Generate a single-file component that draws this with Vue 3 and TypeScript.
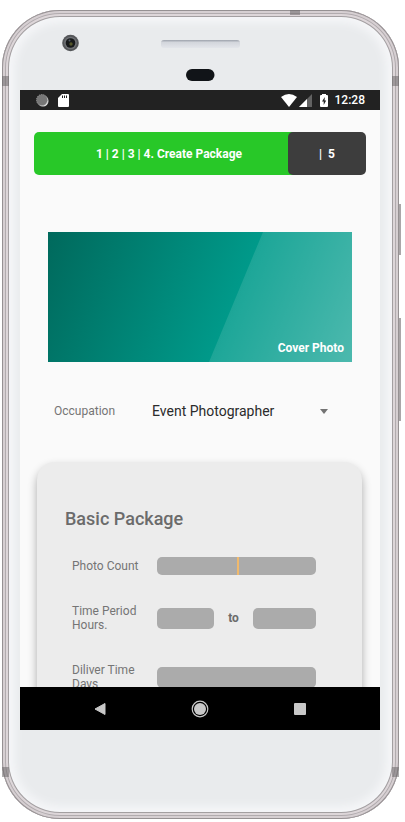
<script setup lang="ts">
import { ref } from 'vue'

const occupations: string[] = ['Event Photographer']
const occupation = ref<string>(occupations[0])
const photoCount = ref<string>('')
const hoursFrom = ref<string>('')
const hoursTo = ref<string>('')
const deliveryDays = ref<string>('')
</script>

<template>
  <div class="stage">
    <div class="phone">
      <span class="side-button power"></span>
      <span class="side-button volume"></span>
      <span class="seam seam-top"></span>
      <span class="seam seam-left upper"></span>
      <span class="seam seam-right upper"></span>
      <span class="seam seam-left lower"></span>
      <span class="seam seam-right lower"></span>

      <svg class="bezel" viewBox="0 0 360 74" aria-hidden="true">
        <defs>
          <linearGradient id="speaker" x1="0" y1="0" x2="0" y2="1">
            <stop offset="0" stop-color="#9ca1ab" />
            <stop offset="0.3" stop-color="#d3d6dc" />
            <stop offset="1" stop-color="#e3e5ea" />
          </linearGradient>
        </defs>
        <circle cx="50.500" cy="27" r="8.300" fill="#55575a" />
        <circle cx="50.500" cy="27" r="6.300" fill="#707276" />
        <circle cx="50.500" cy="27" r="4.800" fill="#17191b" />
        <circle cx="51" cy="28" r="1.700" fill="#55572c" />
        <circle cx="49.500" cy="24.500" r="1" fill="#535c64" />
        <rect x="141" y="24" width="79" height="8" rx="3" fill="url(#speaker)" />
        <rect x="166" y="53" width="28.500" height="12" rx="6" fill="#111418" />
      </svg>

      <div class="screen">
        <header class="status">
          <div class="status-group">
            <svg width="13" height="13" viewBox="0 0 13 13" aria-hidden="true">
              <circle cx="7" cy="7" r="5.500" fill="#e5e5e5" />
              <circle cx="6" cy="6" r="5.500" fill="#777" stroke="#a0a0a0" stroke-dasharray="1 1" />
            </svg>
            <svg width="11" height="13" viewBox="0 0 11 13" aria-hidden="true">
              <path d="M4 0H10Q11 0 11 1V12Q11 13 10 13H1Q0 13 0 12V4Z" fill="#fff" />
              <path d="M4.500 1.500V4M6.500 1.500V4M8.500 1.500V4" stroke="#222" />
            </svg>
          </div>
          <div class="status-group end">
            <svg width="16" height="13" viewBox="0 0 16 13" aria-hidden="true">
              <path d="M0 3Q8-3 16 3L8 13Z" fill="#fff" />
            </svg>
            <svg width="13" height="13" viewBox="0 0 13 13" aria-hidden="true">
              <path d="M0 13L13 0V13Z" fill="#626262" />
              <path d="M0 13L8 5V13Z" fill="#fff" />
            </svg>
            <svg class="battery" width="8" height="13" viewBox="0 0 8 13" aria-hidden="true">
              <path d="M2 0H6V1H7Q8 1 8 2V12Q8 13 7 13H1Q0 13 0 12V2Q0 1 1 1H2Z" fill="#fff" />
              <path d="M4.800 3L2 7.500H3.700V11L6.200 6.500H4.600Z" fill="#222" />
            </svg>
            <time>12:28</time>
          </div>
        </header>

        <main class="content">
          <div class="steps">
            <button type="button" class="step current">1 | 2 | 3 | 4. Create Package</button>
            <button type="button" class="step next">|&nbsp; 5</button>
          </div>

          <button type="button" class="cover">
            <svg class="cover-shade" viewBox="0 0 304 130" preserveAspectRatio="none" aria-hidden="true">
              <defs>
                <linearGradient id="shade" gradientUnits="userSpaceOnUse" x1="180" y1="60" x2="304" y2="112">
                  <stop offset="0" stop-color="#fff" stop-opacity="0.100" />
                  <stop offset="1" stop-color="#fff" stop-opacity="0.290" />
                </linearGradient>
              </defs>
              <path d="M215 0H304V130H161Z" fill="url(#shade)" />
            </svg>
            <span class="cover-label">Cover Photo</span>
          </button>

          <div class="occupation">
            <label for="occupation">Occupation</label>
            <div class="picker">
              <select id="occupation" v-model="occupation">
                <option v-for="name in occupations" :key="name">{{ name }}</option>
              </select>
              <svg width="8" height="5" viewBox="0 0 8 5" aria-hidden="true">
                <path d="M0 0H8L4 5Z" fill="#737373" />
              </svg>
            </div>
          </div>

          <form class="card" @submit.prevent>
            <h2>Basic Package</h2>
            <div class="field">
              <label for="count">Photo Count</label>
              <div class="entry focused">
                <input id="count" v-model="photoCount" class="slim" type="text" />
              </div>
            </div>
            <div class="field">
              <label for="from">Time Period Hours.</label>
              <div class="entry range">
                <input id="from" v-model="hoursFrom" type="text" />
                <label class="to" for="until">to</label>
                <input id="until" v-model="hoursTo" type="text" />
              </div>
            </div>
            <div class="field">
              <label for="days">Diliver Time Days</label>
              <div class="entry">
                <input id="days" v-model="deliveryDays" type="text" />
              </div>
            </div>
          </form>
        </main>

        <nav class="system-nav">
          <button type="button" aria-label="Back">
            <svg width="18" height="18" viewBox="0 0 18 18">
              <path d="M14 3.500V14.500L4 9Z" fill="#c8c8c8" stroke="#c8c8c8" stroke-linejoin="round" />
            </svg>
          </button>
          <button type="button" aria-label="Home">
            <svg width="18" height="18" viewBox="0 0 18 18">
              <circle cx="9" cy="9" r="7.800" fill="none" stroke="#c8c8c8" stroke-width="1.200" />
              <circle cx="9" cy="9" r="6" fill="#c8c8c8" />
            </svg>
          </button>
          <button type="button" aria-label="Overview">
            <svg width="18" height="18" viewBox="0 0 18 18">
              <rect x="3" y="3" width="12" height="12" rx="1" fill="#c8c8c8" />
            </svg>
          </button>
        </nav>
      </div>
    </div>
  </div>
</template>

<style>
body {
  margin: 0;
  background: #fff;
}
</style>

<style scoped>
.stage,
.stage * {
  box-sizing: border-box;
}

.stage {
  display: flex;
  height: 100vh;
  padding: 10px 6px 3px 2px;
  font-family: Roboto, "Liberation Sans", sans-serif;
  font-size: 12px;
  line-height: 14px;
  color: #757575;
}

button,
input,
select {
  margin: 0;
  padding: 0;
  border: 0;
  font: inherit;
  color: inherit;
  appearance: none;
}

.phone {
  position: relative;
  display: flex;
  flex: 1;
  flex-direction: column;
  min-width: 0;
  padding: 6px 19px 89px 18px;
  border-radius: 58px;
  background: #e9ebed;
  box-shadow:
    inset 0 0 0 1px #969193,
    inset 0 0 0 3px #d6cfd2,
    inset 0 0 0 4px #b1abae,
    inset 0 0 0 6px #ddd6d9,
    inset 0 0 0 7px #a39fa1,
    inset 0 0 8px 13px #f5f6f8;
}

.side-button {
  position: absolute;
  right: -2px;
  width: 2px;
  border: 1px solid #aaa6a8;
  background: #c8c8c8;
}

.power {
  top: 194px;
  height: 51px;
}

.volume {
  top: 308px;
  height: 103px;
}

.seam {
  position: absolute;
  width: 7px;
  height: 10px;
  background: #6b67698c;
}

.seam-top {
  top: 0;
  right: 99px;
  width: 10px;
  height: 5px;
}

.seam-left {
  left: 0;
}

.seam-right {
  right: 0;
}

.upper {
  top: 66px;
}

.lower {
  bottom: 42px;
}

.bezel {
  display: block;
  flex: none;
  width: 100%;
  height: 74px;
}

.screen {
  display: flex;
  flex: 1;
  flex-direction: column;
  min-height: 0;
  background: #fafafa;
}

.status {
  display: flex;
  flex: none;
  align-items: center;
  justify-content: space-between;
  height: 20px;
  padding: 0 15px 0 16px;
  background: #222;
  color: #fff;
  font-weight: 500;
}

.status-group {
  display: flex;
  align-items: center;
  gap: 9px;
}

.end {
  gap: 2px;
}

.battery {
  margin: 0 5px 0 6px;
}

.content {
  flex: 1;
  min-height: 0;
  overflow: hidden;
  padding: 22px 14px 0;
}

.steps {
  display: flex;
  height: 43px;
  color: #fff;
}

.step {
  border-radius: 5px;
  font-weight: 700;
}

.current {
  flex: 1;
  background: #28c828;
}

.next {
  width: 78px;
  margin-left: -16px;
  background: #3d3d3d;
}

.cover {
  position: relative;
  display: flex;
  align-items: flex-end;
  justify-content: flex-end;
  width: calc(100% - 28px);
  height: 130px;
  margin: 57px 14px 0;
  padding: 7px 8px;
  background: linear-gradient(112deg, #00695c 0%, #009b8b 62%, #009b8b 100%);
  color: #fff;
  font-weight: 700;
}

.cover-shade {
  position: absolute;
  inset: 0;
  width: 100%;
  height: 100%;
}

.cover-label {
  position: relative;
}

.occupation {
  display: flex;
  align-items: center;
  height: 24px;
  margin: 37px 38px 0 20px;
}

.occupation > label {
  width: 98px;
}

.picker {
  display: flex;
  flex: 1;
  align-items: center;
}

.picker select {
  flex: 1;
  min-width: 0;
  background: transparent;
  color: #2b2b2b;
  font-size: 14px;
  line-height: 20px;
}

.card {
  display: flex;
  flex-direction: column;
  margin: 39px 4px 0 3px;
  padding: 46px 46px 46px 35px;
  border-radius: 18px;
  background: #ececec;
  box-shadow: 0 5px 10px #00000052;
}

h2 {
  margin: 0 0 22px -7px;
  color: #6b6b6b;
  font-size: 18px;
  font-weight: 500;
  line-height: 22px;
}

.field {
  display: flex;
  align-items: center;
  min-height: 28px;
}

.field + .field {
  margin-top: 31px;
}

.field:nth-child(3) {
  margin-top: 24px;
}

.field > label {
  width: 71px;
  margin-right: 14px;
}

.entry {
  position: relative;
  flex: 1;
  min-width: 0;
}

.entry input {
  display: block;
  width: 100%;
  min-width: 0;
  height: 21px;
  border-radius: 5px;
  background: #ababab;
  text-align: center;
}

.entry .slim {
  height: 18px;
}

.focused::after {
  position: absolute;
  top: 0;
  bottom: 0;
  left: 50%;
  width: 2px;
  background: #f0b96c;
  content: "";
}

.range {
  display: grid;
  grid-template-columns: 57fr 39px 63fr;
  align-items: center;
}

.to {
  color: #6b6b6b;
  font-weight: 700;
  text-align: center;
}

.system-nav {
  display: flex;
  flex: none;
  align-items: center;
  justify-content: center;
  gap: 82px;
  height: 43px;
  background: #000;
}

.system-nav button {
  display: flex;
  background: transparent;
}
</style>
